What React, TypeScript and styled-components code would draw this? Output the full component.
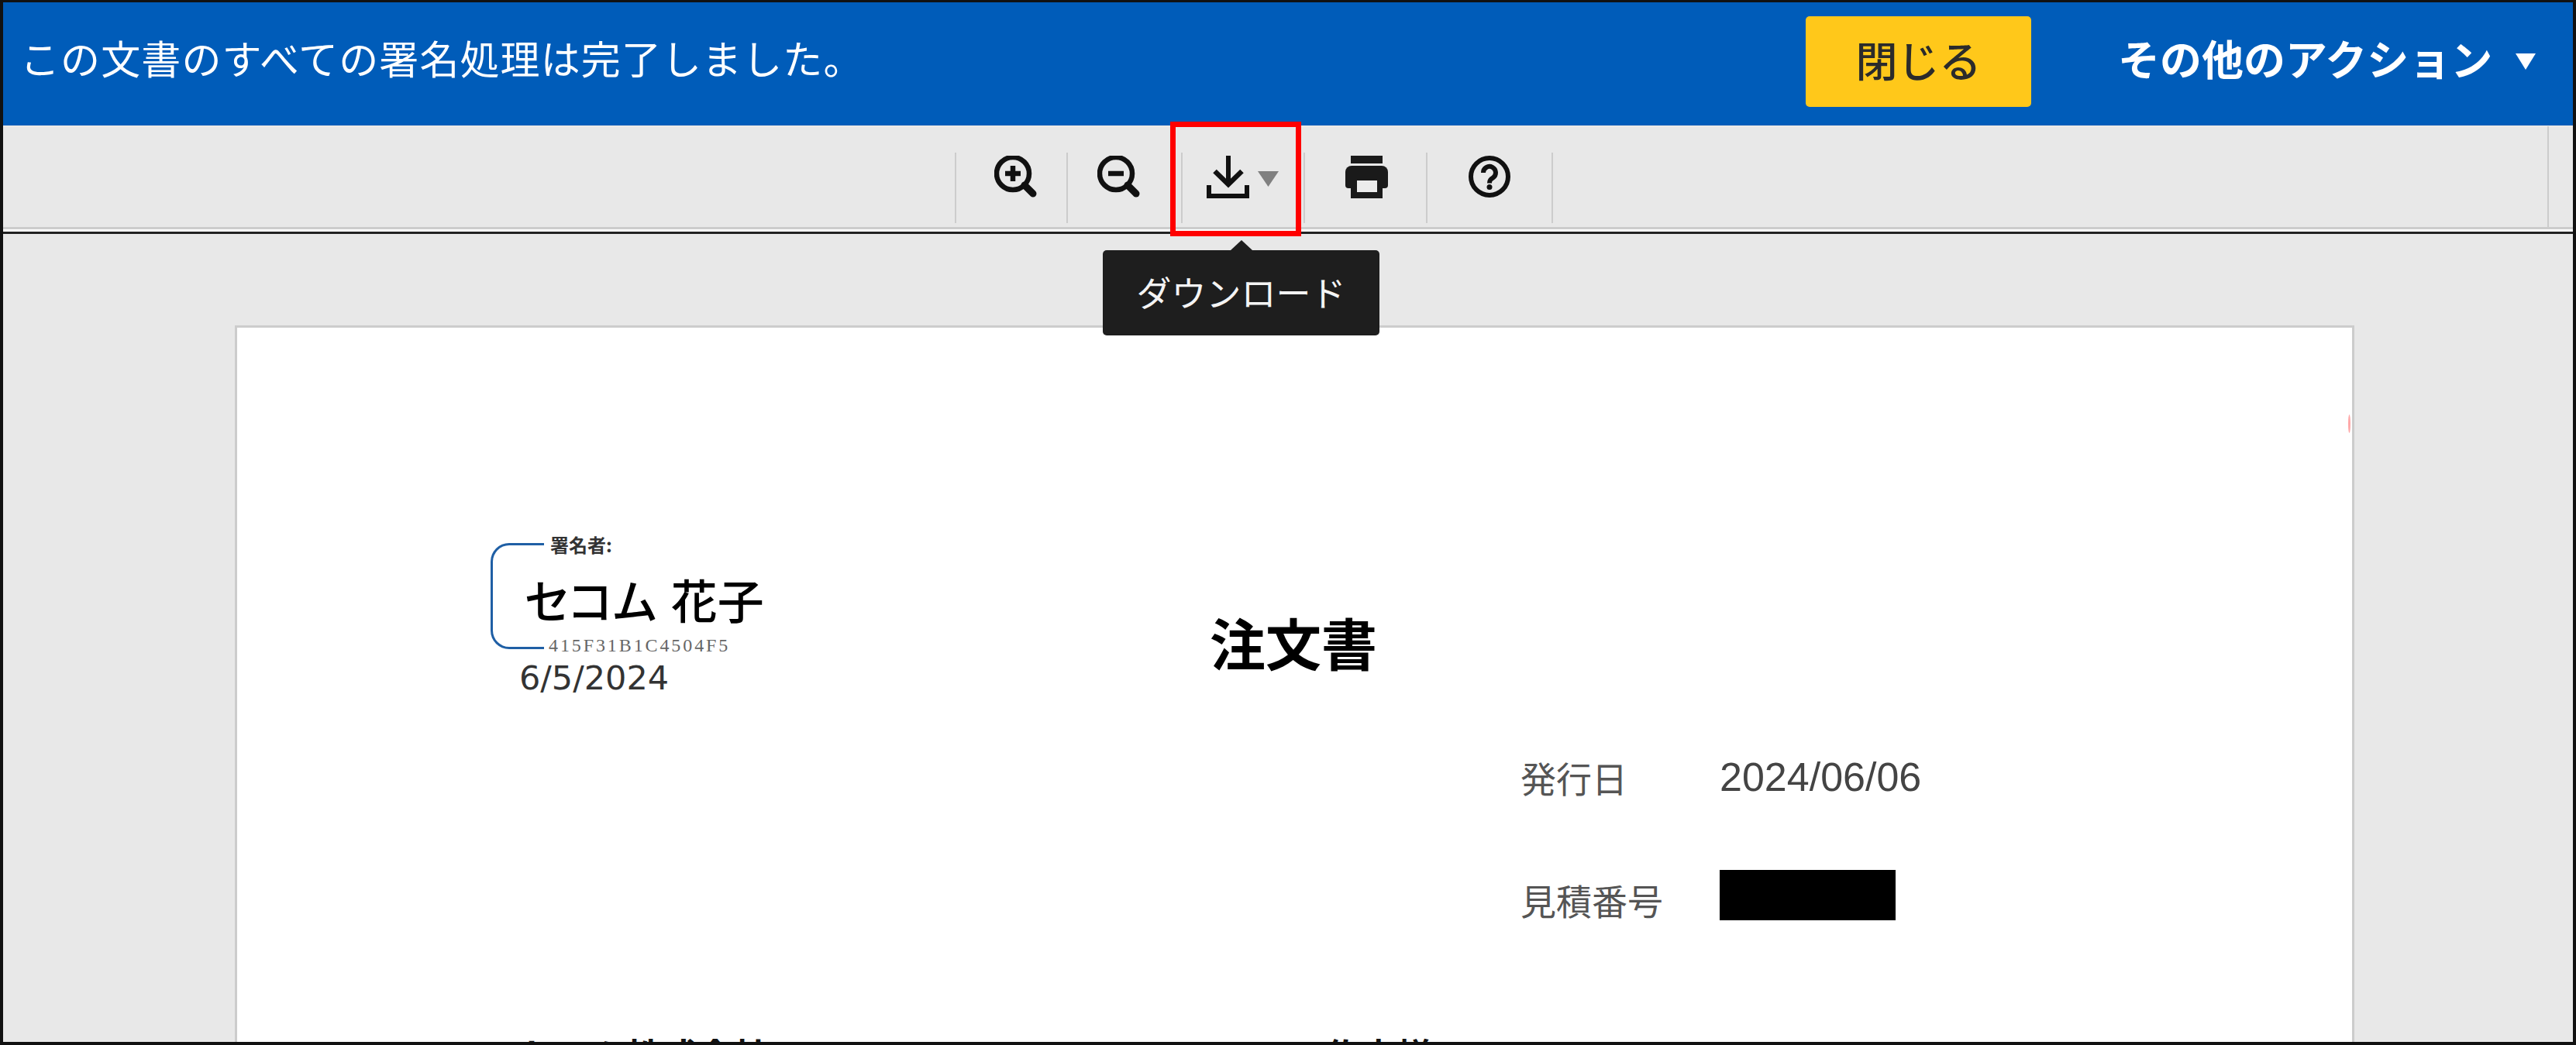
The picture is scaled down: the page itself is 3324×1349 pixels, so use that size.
import * as React from "react";
import styled, { createGlobalStyle } from "styled-components";

const GlobalStyle = createGlobalStyle`
  html, body {
    margin: 0;
    padding: 0;
    background: #e8e8e8;
  }
  body {
    font-family: "Noto Sans CJK JP", "Liberation Sans", sans-serif;
  }
`;

const Frame = styled.div`
  box-sizing: border-box;
  height: 100vh;
  display: flex;
  flex-direction: column;
  overflow: hidden;
  border: solid #111111;
  border-width: 3px 4px 4px;
  background: #e8e8e8;
`;

const Banner = styled.header`
  flex: none;
  height: 159px;
  box-sizing: border-box;
  display: flex;
  align-items: flex-start;
  padding-left: 22px;
  background: #005cb9;
  color: #ffffff;
`;

const Message = styled.div`
  margin-top: 35px;
  font-size: 51px;
  line-height: 72px;
  letter-spacing: 1.1px;
  white-space: nowrap;
`;

const CloseButton = styled.button`
  flex: none;
  width: 291px;
  height: 117px;
  margin: 18px 0 0 auto;
  padding: 0 0 6px;
  border: 0;
  border-radius: 5px;
  background: #ffc81a;
  color: #2b2b2b;
  font-family: inherit;
  font-size: 54px;
  font-weight: 500;
`;

const Actions = styled.div`
  flex: none;
  display: flex;
  align-items: center;
  width: 699px;
  box-sizing: border-box;
  height: 72px;
  margin-top: 35px;
  padding-left: 112px;
  font-size: 54px;
  font-weight: 700;
  white-space: nowrap;
`;

const ActionCaret = styled.span`
  width: 0;
  height: 0;
  margin: 10px 0 0 30px;
  border-style: solid;
  border-width: 21px 13px 0;
  border-color: #ffffff transparent transparent;
`;

const Toolbar = styled.div`
  flex: none;
  height: 134px;
  box-sizing: border-box;
  display: flex;
  align-items: flex-start;
  padding: 34px 0 0 1228px;
  border-top: 1px solid #f4ebe6;
  border-bottom: 3px solid #cccccc;
`;

const ToolButton = styled.div<{ $width: number; $inset: number; $last?: boolean }>`
  position: relative;
  box-sizing: border-box;
  width: ${p => p.$width}px;
  height: 91px;
  padding: 4px 0 0 ${p => p.$inset}px;
  border-left: 2px solid #cccccc;
  border-right: ${p => (p.$last ? "2px solid #cccccc" : "0")};

  svg {
    display: block;
  }
`;

const ToolbarEnd = styled.div`
  width: 33px;
  height: 133px;
  margin: -34px 0 0 auto;
  border-left: 2px solid #cccccc;
  box-sizing: border-box;
`;

const Highlight = styled.div`
  position: absolute;
  left: -16px;
  top: -40px;
  width: 169px;
  height: 148px;
  box-sizing: border-box;
  border: 7px solid #ff0000;
  z-index: 3;
`;

const Tip = styled.div`
  position: absolute;
  left: -103px;
  top: 126px;
  width: 357px;
  height: 110px;
  box-sizing: border-box;
  padding-bottom: 4px;
  display: flex;
  align-items: center;
  justify-content: center;
  border-radius: 5px;
  background: #1e1e1e;
  color: #f4f4f4;
  font-size: 45px;
  z-index: 4;

  &::before {
    content: "";
    position: absolute;
    left: 165px;
    top: -13px;
    border-style: solid;
    border-width: 0 14px 13px;
    border-color: transparent transparent #1e1e1e;
  }
`;

const Rule = styled.div`
  flex: none;
  height: 3px;
  background: #ffffff;
  border-bottom: 3px solid #222222;
`;

const Viewer = styled.main`
  flex: 1;
  min-height: 0;
  overflow: hidden;
  padding: 118px 0 0 299px;
  background: #e8e8e8;
`;

const Sheet = styled.section`
  position: relative;
  box-sizing: border-box;
  width: 2735px;
  height: 2000px;
  padding-top: 268px;
  border: 3px solid #cccccc;
  background: #ffffff;
  color: #111111;
`;

const RedMark = styled.i`
  position: absolute;
  right: 2px;
  top: 112px;
  width: 3px;
  height: 24px;
  border-radius: 50%;
  background: #ffa8a8;
`;

const TopRow = styled.div`
  display: flex;
  align-items: flex-start;
  padding-left: 327px;
  height: 279px;
`;

const SignBlock = styled.div`
  position: relative;
  width: 928px;
  flex: none;

  &::before {
    content: "";
    position: absolute;
    left: 0;
    top: 10px;
    width: 69px;
    height: 137px;
    box-sizing: border-box;
    border: solid #1f5fa5;
    border-width: 3px 0 3px 3px;
    border-radius: 24px 0 0 24px;
  }
`;

const SignLabel = styled.div`
  padding-left: 77px;
  font-size: 24px;
  line-height: 24px;
  font-weight: 700;
  color: #333333;
`;

const SignName = styled.div`
  padding: 16px 0 0 44px;
  font-size: 60px;
  line-height: 84px;
  font-weight: 500;
  font-feature-settings: "palt";
  word-spacing: 5px;
  white-space: nowrap;
  color: #000000;
`;

const SignSerial = styled.div`
  padding: 8px 0 0 75px;
  font-family: "Liberation Serif", serif;
  font-size: 24px;
  line-height: 20px;
  letter-spacing: 2.9px;
  color: #666666;
`;

const SignDate = styled.div`
  padding: 7px 0 0 37px;
  font-family: "DejaVu Sans", sans-serif;
  font-size: 43px;
  line-height: 50px;
  color: #333333;
`;

const Title = styled.h1`
  margin: 87px 0 0;
  font-size: 72px;
  line-height: 100px;
  font-weight: 700;
  color: #000000;
`;

const MetaGrid = styled.div`
  display: grid;
  grid-template-columns: 257px 240px;
  grid-auto-rows: 158px;
  padding-left: 1656px;
`;

const MetaLabel = styled.div`
  font-size: 46px;
  line-height: 66px;
  color: #555555;
`;

const MetaValue = styled.div`
  font-family: "Liberation Sans", sans-serif;
  font-size: 52px;
  line-height: 66px;
  color: #444444;
`;

const Redacted = styled.div`
  width: 227px;
  height: 65px;
  margin-top: -5px;
  background: #000000;
`;

const AddressRow = styled.div`
  display: flex;
  padding-left: 364px;
  margin-top: 41px;
  font-size: 46px;
  line-height: 66px;
  font-weight: 700;
`;

const Company = styled.div`
  width: 1040px;
`;

const ZoomIcon = ({ minus }: { minus?: boolean }) => (
  <svg width="58" height="58" viewBox="0 0 58 58" fill="none" stroke="#111111">
    <circle cx="24" cy="23" r="21" strokeWidth="6.500" />
    <line x1="39" y1="38" x2="50" y2="49" strokeWidth="9" strokeLinecap="round" />
    <line x1="14" y1="23" x2="34" y2="23" strokeWidth="6.500" />
    {!minus && <line x1="24" y1="13" x2="24" y2="33" strokeWidth="6.500" />}
  </svg>
);

const DownloadIcon = () => (
  <svg width="94" height="55" viewBox="0 0 94 55" fill="none" stroke="#111111">
    <line x1="28" y1="0" x2="28" y2="37" strokeWidth="6" />
    <polyline points="10.5,20 28,37 45.5,20" strokeWidth="6.500" />
    <path d="M3 38V52H52V38" strokeWidth="6" />
    <polygon points="66,20 93,20 79.5,40" fill="#808080" stroke="none" />
  </svg>
);

const PrintIcon = () => (
  <svg width="55" height="55" viewBox="0 0 55 55" fill="#1a1a1a">
    <rect x="7" y="0" width="41" height="10" />
    <path d="M8 13H47a8 8 0 0 1 8 8V38a4 4 0 0 1-4 4H4a4 4 0 0 1-4-4V21a8 8 0 0 1 8-8Z" />
    <rect x="7" y="30" width="41" height="25" />
    <rect x="15" y="32" width="26" height="15" fill="#ececec" />
  </svg>
);

const HelpIcon = () => (
  <svg width="54" height="54" viewBox="0 0 54 54" fill="none" stroke="#111111" strokeWidth="6">
    <circle cx="27" cy="27" r="24" />
    <path d="M19 22a8 8 0 1 1 12.500 6.500c-3 2-4.500 3-4.500 7" />
    <circle cx="27" cy="40.500" r="3.500" fill="#111111" stroke="none" />
  </svg>
);

const App = () => (
  <Frame>
    <GlobalStyle />
    <Banner>
      <Message>この文書のすべての署名処理は完了しました。</Message>
      <CloseButton>閉じる</CloseButton>
      <Actions>
        その他のアクション
        <ActionCaret />
      </Actions>
    </Banner>
    <Toolbar>
      <ToolButton $width={144} $inset={49}>
        <ZoomIcon />
      </ToolButton>
      <ToolButton $width={148} $inset={38}>
        <ZoomIcon minus />
      </ToolButton>
      <ToolButton $width={158} $inset={31}>
        <DownloadIcon />
        <Highlight />
        <Tip>ダウンロード</Tip>
      </ToolButton>
      <ToolButton $width={158} $inset={52}>
        <PrintIcon />
      </ToolButton>
      <ToolButton $width={164} $inset={53} $last>
        <HelpIcon />
      </ToolButton>
      <ToolbarEnd />
    </Toolbar>
    <Rule />
    <Viewer>
      <Sheet>
        <RedMark />
        <TopRow>
          <SignBlock>
            <SignLabel>署名者:</SignLabel>
            <SignName>セコム 花子</SignName>
            <SignSerial>415F31B1C4504F5</SignSerial>
            <SignDate>6/5/2024</SignDate>
          </SignBlock>
          <Title>注文書</Title>
        </TopRow>
        <MetaGrid>
          <MetaLabel>発行日</MetaLabel>
          <MetaValue>2024/06/06</MetaValue>
          <MetaLabel>見積番号</MetaLabel>
          <Redacted />
        </MetaGrid>
        <AddressRow>
          <Company>セコム株式会社</Company>
          <Company>佐商様</Company>
        </AddressRow>
      </Sheet>
    </Viewer>
  </Frame>
);

export default App;
